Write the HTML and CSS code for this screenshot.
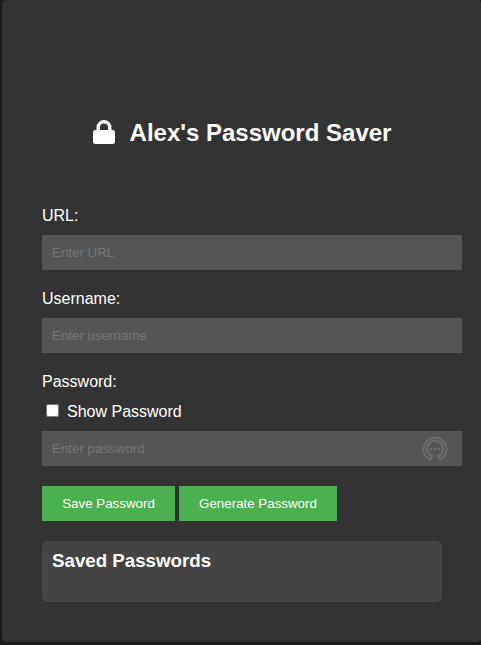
FILE: index.html
```
<!DOCTYPE html>
<html lang="en">
<head>
<meta charset="utf-8">
<title>Alex's Password Saver</title>
<link rel="stylesheet" href="styles.css">
</head>
<body>
<main class="card">
  <h1 class="title">
    <svg class="lock" viewBox="0 0 22 24" aria-hidden="true"><rect y="10" width="22" height="14" rx="2.2" fill="#fff"/><path d="M5.2 12V7.6a5.8 5.8 0 0 1 11.6 0V12" fill="none" stroke="#fff" stroke-width="3.5"/></svg>
    <span>Alex's Password Saver</span>
  </h1>
  <form class="form">
    <label class="label" for="url">URL:</label>
    <input class="field" id="url" type="text" placeholder="Enter URL">
    <label class="label" for="username">Username:</label>
    <input class="field" id="username" type="text" placeholder="Enter username">
    <label class="label label-password" for="password">Password:</label>
    <div class="show">
      <input class="check" type="checkbox" id="show">
      <label for="show">Show Password</label>
    </div>
    <div class="password">
      <input class="field" id="password" type="password" placeholder="Enter password">
      <svg class="manager" viewBox="0 0 26 26" fill="none" stroke="#6e6e6e" aria-hidden="true">
        <path stroke-width="1.8" d="M8.2 23.5A11.5 11.5 0 1 1 17.8 23.5"/>
        <path stroke-width="1.8" d="M8.2 23.5L10.3 20.2A8 8 0 1 1 15.7 20.2L17.8 23.5"/>
        <g fill="#6e6e6e" stroke="none"><circle cx="9" cy="13" r="1.2"/><circle cx="13" cy="13" r="1.2"/><circle cx="17" cy="13" r="1.2"/></g>
      </svg>
    </div>
    <div class="actions">
      <button class="button save" type="button">Save Password</button>
      <button class="button generate" type="button">Generate Password</button>
    </div>
  </form>
  <section class="saved">
    <h2 class="saved-title">Saved Passwords</h2>
  </section>
</main>
</body>
</html>
```
FILE: styles.css
```
* {
  box-sizing: border-box;
}

body {
  margin: 0;
  background: #1c1a1b;
  color: #fff;
  font: 16px/18px "Liberation Sans", Arial, sans-serif;
  overflow: hidden;
}

.card {
  width: 480px;
  height: 642px;
  margin-left: 2px;
  padding: 119px 40px 0;
  background: #333;
  border-radius: 5px;
}

.title {
  display: flex;
  align-items: center;
  justify-content: center;
  gap: 15px;
  height: 28px;
  margin: 0 0 60px;
  font-size: 24px;
  line-height: 28px;
}

.lock {
  width: 22px;
  height: 24px;
  margin-bottom: 2px;
}

.form {
  display: flex;
  flex-direction: column;
}

.label {
  height: 18px;
  margin-bottom: 10px;
}

.label-password {
  margin-bottom: 12px;
}

.field {
  display: block;
  width: 420px;
  height: 35px;
  margin: 0 0 20px;
  padding: 10px;
  border: 0;
  border-radius: 0;
  background: #555;
  color: #fff;
  font: 13.333px "Liberation Sans", Arial, sans-serif;
}

.field::placeholder {
  color: #757575;
  opacity: 1;
}

.show {
  display: flex;
  align-items: center;
  gap: 8px;
  height: 18px;
  margin-bottom: 10px;
}

.check {
  width: 13px;
  height: 13px;
  margin: 0 0 3px 4px;
}

.password {
  position: relative;
  width: 420px;
}

.manager {
  position: absolute;
  top: 5px;
  right: 14px;
  width: 26px;
  height: 26px;
}

.actions {
  display: flex;
  gap: 4px;
  margin-bottom: 20px;
}

.button {
  height: 35px;
  padding: 0;
  border: 0;
  background: #4caf50;
  color: #fff;
  font: 13.333px "Liberation Sans", Arial, sans-serif;
}

.save {
  width: 133px;
}

.generate {
  width: 158px;
}

.saved {
  height: 61px;
  padding: 10px;
  border-radius: 5px;
  background: #444;
}

.saved-title {
  margin: 0;
  font-size: 18.72px;
  line-height: 20px;
}
```
